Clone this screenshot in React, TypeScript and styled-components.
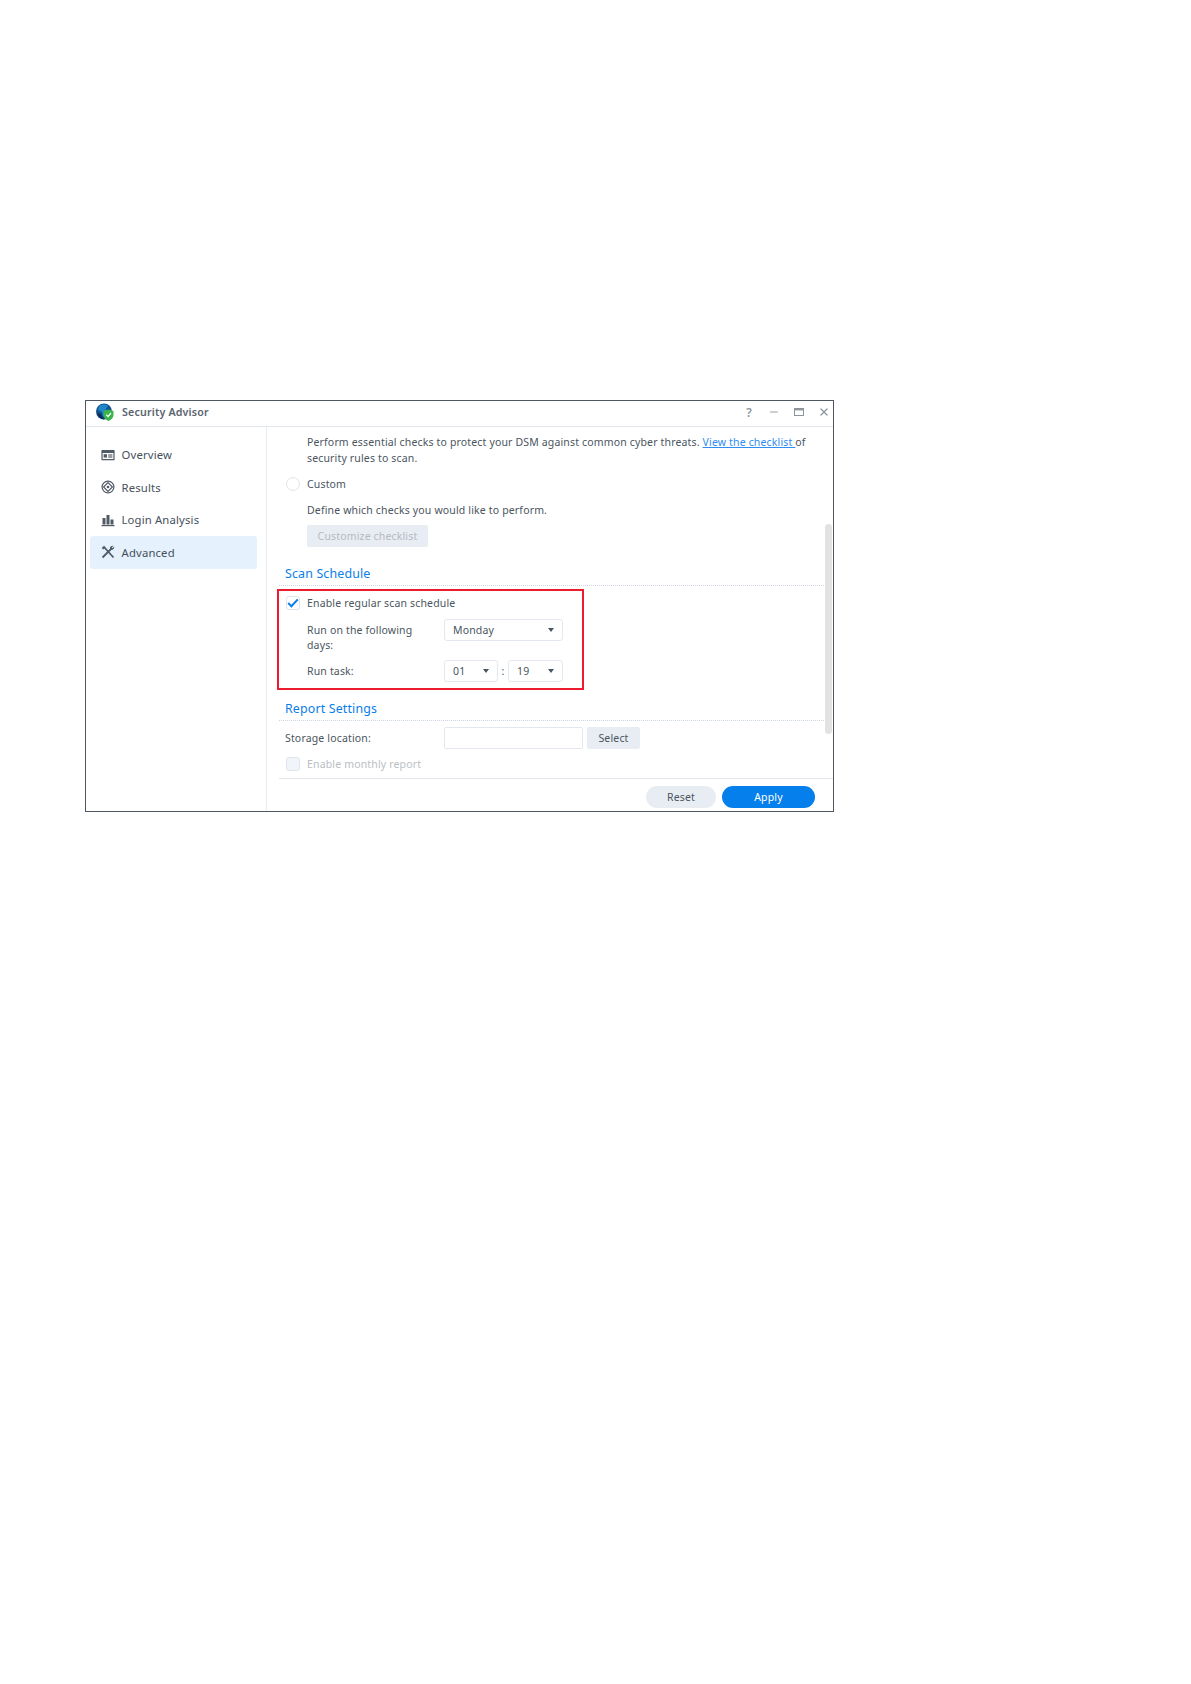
import React from 'react';
import styled, { createGlobalStyle } from 'styled-components';
import { X, Minus } from 'lucide-react';

const GlobalStyle = createGlobalStyle`
  html, body {
    margin: 0;
    padding: 0;
    background: #fff;
  }
  body {
    min-height: 1684px;
    font-family: "Noto Sans", "Liberation Sans", sans-serif;
    font-size: 10.5px;
    letter-spacing: 0.16px;
    color: #4a5560;
  }
`;

const Window = styled.div`
  box-sizing: border-box;
  width: 749px;
  height: 412px;
  margin: 400px 0 0 85px;
  border: 1px solid #4f5661;
  display: flex;
  flex-direction: column;
  position: relative;
`;

const TitleBar = styled.div`
  box-sizing: border-box;
  height: 26px;
  flex: none;
  display: flex;
  align-items: center;
  gap: 7px;
  padding: 0 0 3px 10px;
  border-bottom: 1px solid #e3e8ef;
`;

const AppTitle = styled.div`
  flex: 1;
  margin-left: 1px;
  font-size: 10.7px;
  font-weight: 600;
  color: #5a636e;
`;

const WinButton = styled.div`
  width: 18px;
  display: flex;
  justify-content: center;
  color: #8d949c;
  font-size: 12px;
  font-weight: 600;
`;

const Body = styled.div`
  flex: 1;
  display: flex;
  min-height: 0;
`;

const Sidebar = styled.nav`
  box-sizing: border-box;
  width: 181px;
  flex: none;
  padding: 11.5px 9px 0 4px;
  border-right: 1px solid #e8ecf2;
  display: flex;
  flex-direction: column;
`;

const NavItem = styled.div<{ $active?: boolean }>`
  height: 32.5px;
  display: flex;
  align-items: center;
  padding-left: 11px;
  gap: 6.5px;
  border-radius: 3px;
  background: ${(p) => (p.$active ? '#e5f1fc' : 'transparent')};
  color: #46505b;
  font-size: 11.3px;
`;

const Main = styled.div`
  flex: 1;
  min-width: 0;
  display: flex;
  flex-direction: column;
  position: relative;
`;

const Pane = styled.div`
  flex: 1;
  padding: 7px 5px 0 12px;
`;

const Para = styled.div<{ $top?: number }>`
  margin: ${(p) => p.$top ?? 0}px 0 0 28px;
  line-height: 16px;
  width: 510px;
`;

const Link = styled.a`
  color: #2f8df0;
  text-decoration: underline;
`;

const OptionRow = styled.div<{ $disabled?: boolean; $top: number }>`
  display: flex;
  align-items: center;
  height: 16px;
  margin-top: ${(p) => p.$top}px;
  margin-left: 7px;
  gap: 7px;
  color: ${(p) => (p.$disabled ? '#b9bec5' : 'inherit')};
`;

const Radio = styled.span`
  box-sizing: border-box;
  width: 14px;
  height: 14px;
  border-radius: 50%;
  border: 1px solid #dfe5ec;
`;

const Check = styled.span<{ $disabled?: boolean }>`
  box-sizing: border-box;
  width: 14px;
  height: 14px;
  border-radius: 3px;
  border: 1px solid #dfe5ec;
  background: ${(p) => (p.$disabled ? '#f1f4f8' : '#fff')};
  display: flex;
  align-items: center;
  justify-content: center;
`;

const Button = styled.button<{ $disabled?: boolean }>`
  font: inherit;
  letter-spacing: inherit;
  border: none;
  border-radius: 2px;
  background: #e8ecf3;
  color: ${(p) => (p.$disabled ? '#b4bac3' : '#4a5560')};
  padding: 0;
`;

const ChecklistButton = styled(Button)`
  display: block;
  width: 121px;
  height: 22px;
  margin: 7px 0 0 28px;
`;

const SectionTitle = styled.div<{ $top: number }>`
  margin-top: ${(p) => p.$top}px;
  padding: 0 0 3px 6px;
  line-height: 16px;
  font-size: 12.4px;
  color: #0a7ee8;
  border-bottom: 1px dotted #ccd5df;
`;

const Highlight = styled.div`
  box-sizing: border-box;
  width: 307px;
  height: 101px;
  margin: 3px 0 0 -2px;
  padding-top: 4px;
  border: 2px solid #ec1c2e;
`;

const HighlightOption = styled(OptionRow)`
  margin-left: 7px;
`;

const FieldRow = styled.div`
  display: flex;
  margin: 8px 0 0 28px;

  & + & {
    margin-top: 7px;
  }
`;

const FieldLabel = styled.div`
  width: 137px;
  padding-top: 4px;
  line-height: 15px;
  padding-right: 30px;
  box-sizing: border-box;
`;

const Select = styled.div<{ $width: number }>`
  box-sizing: border-box;
  width: ${(p) => p.$width}px;
  height: 22px;
  border: 1px solid #e3e8ef;
  border-radius: 3px;
  display: flex;
  align-items: center;
  justify-content: space-between;
  padding: 0 8px;

  &::after {
    content: '';
    border-left: 3.5px solid transparent;
    border-right: 3.5px solid transparent;
    border-top: 4px solid #4a5560;
  }
`;

const Colon = styled.div`
  width: 10px;
  text-align: center;
  line-height: 22px;
`;

const StorageRow = styled.div`
  display: flex;
  align-items: center;
  height: 22px;
  margin: 6px 0 0 6px;
`;

const StorageLabel = styled.div`
  width: 159px;
`;

const Input = styled.div`
  box-sizing: border-box;
  width: 139px;
  height: 22px;
  border: 1px solid #e3e8ef;
  border-radius: 2px;
`;

const SelectButton = styled(Button)`
  width: 53px;
  height: 22px;
  margin-left: 4px;
`;

const Footer = styled.div`
  box-sizing: border-box;
  height: 33px;
  flex: none;
  margin-left: 12px;
  padding: 7px 18px 0 0;
  border-top: 1px solid #e3e8ef;
  display: flex;
  justify-content: flex-end;
  gap: 6px;
`;

const PillButton = styled.button<{ $primary?: boolean }>`
  font: inherit;
  letter-spacing: inherit;
  border: none;
  padding: 0;
  height: 22px;
  width: ${(p) => (p.$primary ? 93 : 70)}px;
  border-radius: 11px;
  background: ${(p) => (p.$primary ? '#057fec' : '#e8ecf3')};
  color: ${(p) => (p.$primary ? '#fff' : '#4a5560')};
`;

const ScrollThumb = styled.div`
  position: absolute;
  right: 1px;
  top: 97px;
  width: 7px;
  height: 210px;
  border-radius: 4px;
  background: #e2e2e2;
`;

const CheckMark = ({ color = '#0a7ee8' }: { color?: string }) => (
  <svg width="12" height="10" viewBox="0 0 12 10">
    <path d="M1.2 5 L4.4 8.2 L10.8 1.4" fill="none" stroke={color} strokeWidth="2" />
  </svg>
);

const Logo = () => (
  <svg width="18" height="18" viewBox="0 0 18 18">
    <circle cx="8" cy="8.5" r="8" fill="#14518f" />
    <path d="M3 3 C6 1 10 1 12 3 L10 6 L11 11 L7 14 L6 9 L2 7 Z" fill="#1f86c9" />
    <path d="M1 10 C2 14 5 16 8 16.5 L5 11 Z" fill="#0d2f5c" />
    <path d="M7.5 8 L12.5 6.4 L17.5 8 L17.5 12 C17.5 15 15 17 12.5 18 C10 17 7.5 15 7.5 12 Z" fill="#39b54a" />
    <path d="M10.3 11.8 L12 13.6 L15 10" fill="none" stroke="#fff" strokeWidth="1.3" />
  </svg>
);

const OverviewIcon = () => (
  <svg width="14" height="14" viewBox="0 0 14 14">
    <path
      fillRule="evenodd"
      d="M1 2 H13 A.6.6 0 0 1 13.6 2.6 V11.6 A.6.6 0 0 1 13 12.2 H1 A.6.6 0 0 1 .4 11.6 V2.6 A.6.6 0 0 1 1 2 Z M1.6 5 V11 H12.4 V5 Z"
      fill="#515b66"
    />
    <rect x="2.6" y="6.2" width="3.4" height="3.4" fill="#515b66" />
    <rect x="7.2" y="6.4" width="4.2" height="1.2" fill="#515b66" />
    <rect x="7.2" y="8.4" width="4.2" height="1.2" fill="#515b66" />
  </svg>
);

const ResultsIcon = () => (
  <svg width="14" height="14" viewBox="0 0 14 14" fill="none" stroke="#515b66">
    <circle cx="7" cy="7" r="5.9" strokeWidth="1.2" />
    <path d="M7 2.6 L11.4 7 L7 11.4 L2.6 7 Z" strokeWidth="1.2" />
    <circle cx="7" cy="7" r="1.3" fill="#515b66" stroke="none" />
  </svg>
);

const LoginIcon = () => (
  <svg width="14" height="14" viewBox="0 0 14 14" fill="#515b66">
    <rect x="1.5" y="5" width="3" height="6.5" />
    <rect x="5.5" y="2" width="3" height="9.5" />
    <rect x="9.5" y="6.5" width="3" height="5" />
    <rect x="0.5" y="12" width="13" height="1.2" />
  </svg>
);

const AdvancedIcon = () => (
  <svg width="14" height="14" viewBox="0 0 14 14" fill="none" stroke="#515b66" strokeWidth="1.8">
    <path d="M3 2 L12.5 12.5" />
    <path d="M10.5 3.5 L1.5 12.5" />
    <path d="M.7 3 L3 .7 L4.6 2.3 L2.3 4.6 Z" fill="#515b66" stroke="none" />
    <path d="M9 3 C9 1.5 10.5.5 12.5.8 L10.8 2.5 L11.5 3.2 L13.2 1.5 C13.5 3.5 12 5 10.5 5 Z" fill="#515b66" stroke="none" />
  </svg>
);

const MaximizeIcon = () => (
  <svg width="10" height="10" viewBox="0 0 10 10">
    <rect x=".5" y="1.5" width="9" height="7" fill="none" stroke="#8d949c" />
    <rect x=".5" y="1" width="9" height="2.4" fill="#8d949c" />
  </svg>
);

const navItems = [
  { label: 'Overview', icon: <OverviewIcon /> },
  { label: 'Results', icon: <ResultsIcon /> },
  { label: 'Login Analysis', icon: <LoginIcon /> },
  { label: 'Advanced', icon: <AdvancedIcon />, active: true },
];

export default function App() {
  return (
    <>
      <GlobalStyle />
      <Window>
        <TitleBar>
          <Logo />
          <AppTitle>Security Advisor</AppTitle>
          <WinButton>?</WinButton>
          <WinButton>
            <Minus size={12} strokeWidth={1.8} />
          </WinButton>
          <WinButton>
            <MaximizeIcon />
          </WinButton>
          <WinButton>
            <X size={12} strokeWidth={2.6} />
          </WinButton>
        </TitleBar>
        <Body>
          <Sidebar>
            {navItems.map((item) => (
              <NavItem key={item.label} $active={item.active}>
                {item.icon}
                {item.label}
              </NavItem>
            ))}
          </Sidebar>
          <Main>
            <Pane>
              <Para>
                Perform essential checks to protect your DSM against common cyber threats.{' '}
                <Link>View the checklist </Link>of security rules to scan.
              </Para>
              <OptionRow $top={10}>
                <Radio />
                Custom
              </OptionRow>
              <Para $top={10}>Define which checks you would like to perform.</Para>
              <ChecklistButton $disabled>Customize checklist</ChecklistButton>

              <SectionTitle $top={19}>Scan Schedule</SectionTitle>
              <Highlight>
                <HighlightOption $top={0}>
                  <Check>
                    <CheckMark />
                  </Check>
                  Enable regular scan schedule
                </HighlightOption>
                <FieldRow>
                  <FieldLabel>Run on the following days:</FieldLabel>
                  <Select $width={119}>Monday</Select>
                </FieldRow>
                <FieldRow>
                  <FieldLabel>Run task:</FieldLabel>
                  <Select $width={54}>01</Select>
                  <Colon>:</Colon>
                  <Select $width={55}>19</Select>
                </FieldRow>
              </Highlight>

              <SectionTitle $top={11}>Report Settings</SectionTitle>
              <StorageRow>
                <StorageLabel>Storage location:</StorageLabel>
                <Input />
                <SelectButton>Select</SelectButton>
              </StorageRow>
              <OptionRow $top={7} $disabled>
                <Check $disabled />
                Enable monthly report
              </OptionRow>
            </Pane>
            <Footer>
              <PillButton>Reset</PillButton>
              <PillButton $primary>Apply</PillButton>
            </Footer>
            <ScrollThumb />
          </Main>
        </Body>
      </Window>
    </>
  );
}
